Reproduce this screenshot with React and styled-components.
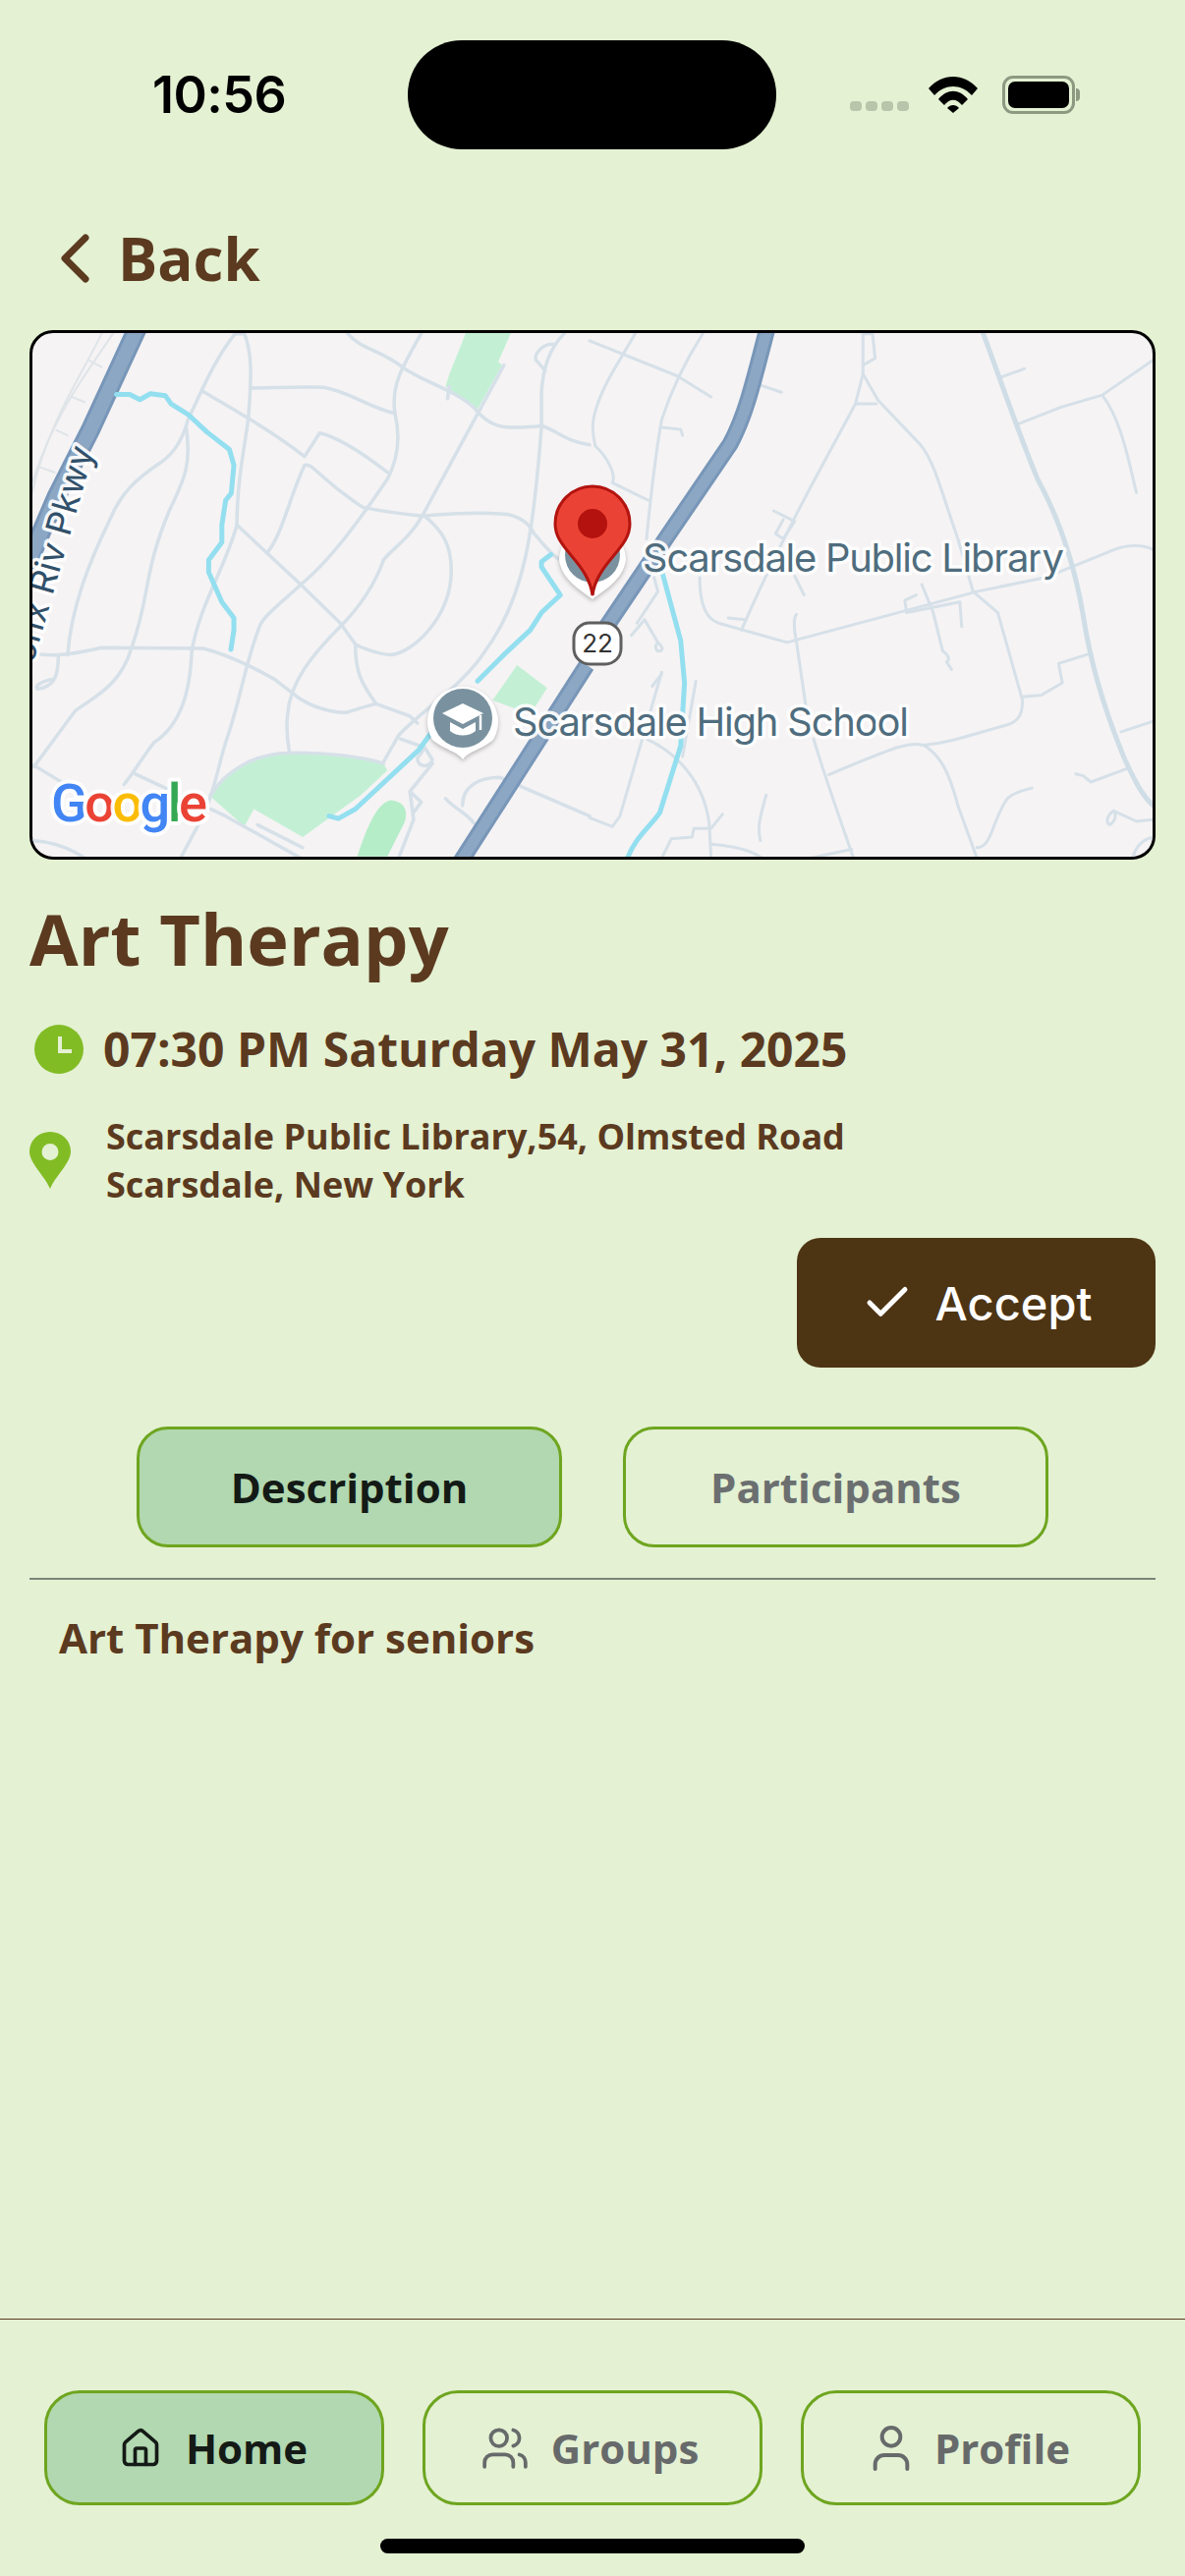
import React from "react"
import styled, { createGlobalStyle } from "styled-components"
import { Check, House, User, Users } from "lucide-react"

const BROWN = "#5b3a20"
const GREEN = "#6ea51f"

const GlobalStyle = createGlobalStyle`
  html, body { margin: 0; padding: 0; }
  body { background: #e4f1d3; font-family: "Open Sans", "Noto Sans", sans-serif; }
`

const Page = styled.div`
  width: 1206px;
  height: 2622px;
  display: flex;
  flex-direction: column;
  background: #e4f1d3;
  overflow: hidden;
`
const StatusBar = styled.div`
  height: 152px;
  padding-top: 41px;
  box-sizing: border-box;
  display: grid;
  grid-template-columns: 415px 375px 1fr;
`
const Time = styled.div`
  font-family: Inter, "Liberation Sans", Arial, sans-serif;
  font-size: 52px;
  line-height: 60px;
  font-weight: 600;
  letter-spacing: -0.5px;
  color: #000;
  padding: 26px 0 0 155px;
`
const Island = styled.div`
  height: 111px;
  background: #000;
  border-radius: 55px;
`
const StatusIcons = styled.div`
  display: flex;
  align-items: flex-start;
  padding: 36px 0 0 75px;
`
const Dots = styled.div`
  display: flex;
  gap: 4px;
  margin: 26px 20px 0 0;
`
const Dot = styled.span`
  width: 12px;
  height: 10px;
  border-radius: 4px;
  background: #b7c6aa;
`
const Battery = styled.div`
  position: relative;
  width: 74px;
  height: 39px;
  margin-left: 25px;
  box-sizing: border-box;
  border: 3px solid #8d9a82;
  border-radius: 11px;
  padding: 3px;
  &::before {
    content: "";
    display: block;
    height: 100%;
    background: #000;
    border-radius: 7px;
  }
  &::after {
    content: "";
    position: absolute;
    right: -8px;
    top: 10px;
    width: 4px;
    height: 13px;
    border-radius: 0 4px 4px 0;
    background: #8d9a82;
  }
`
const BackRow = styled.div`
  height: 184px;
  box-sizing: border-box;
  padding: 71px 0 0 60px;
  display: flex;
  align-items: flex-start;
  gap: 28px;
  color: ${BROWN};
  font-size: 60px;
  line-height: 80px;
  font-weight: 700;
  svg { margin-top: 15px; }
`
const Content = styled.div`
  padding: 0 30px;
  display: flex;
  flex-direction: column;
`
const MapFrame = styled.div`
  height: 539px;
  box-sizing: border-box;
  border: 3px solid #000;
  border-radius: 24px;
  overflow: hidden;
  background: #f5f3f4;
  svg { display: block; }
`
const Title = styled.h1`
  margin: 31px 0 0;
  font-size: 72px;
  line-height: 98px;
  font-weight: 700;
  color: ${BROWN};
`
const DateRow = styled.div`
  display: flex;
  align-items: center;
  gap: 20px;
  margin-top: 32px;
  padding-left: 5px;
  color: ${BROWN};
  font-size: 48px;
  line-height: 64px;
  font-weight: 700;
`
const AddressRow = styled.div`
  display: flex;
  align-items: center;
  gap: 36px;
  margin-top: 32px;
  color: ${BROWN};
  font-size: 36px;
  line-height: 49px;
  font-weight: 700;
`
const ActionRow = styled.div`
  display: flex;
  justify-content: flex-end;
  margin-top: 30px;
`
const AcceptButton = styled.div`
  width: 365px;
  height: 132px;
  display: flex;
  align-items: center;
  justify-content: center;
  gap: 22px;
  border-radius: 24px;
  background: #4d3413;
  color: #fff;
  font-family: Inter, "Liberation Sans", sans-serif;
  font-size: 47px;
  font-weight: 500;
`
const Tabs = styled.div`
  display: flex;
  justify-content: center;
  gap: 62px;
  margin-top: 60px;
  padding-bottom: 31px;
  border-bottom: 2px solid #7c8579;
`
const Tab = styled.div`
  width: 433px;
  height: 123px;
  box-sizing: border-box;
  display: flex;
  align-items: center;
  justify-content: center;
  border: 3px solid ${GREEN};
  border-radius: 32px;
  background: ${(p) => (p.$active ? "#b1d8b0" : "transparent")};
  color: ${(p) => (p.$active ? "#141a16" : "#6b6f70")};
  font-size: 42px;
  font-weight: 700;
`
const Description = styled.p`
  margin: 30px 0 0 30px;
  color: ${BROWN};
  font-size: 42px;
  line-height: 58px;
  font-weight: 700;
`
const BottomBar = styled.div`
  margin-top: auto;
  border-top: 1px solid ${BROWN};
  padding: 72px 45px 0;
  height: 262px;
  box-sizing: border-box;
  display: flex;
  flex-direction: column;
`
const NavRow = styled.div`
  display: flex;
  justify-content: space-between;
`
const NavButton = styled.div`
  width: 346px;
  height: 117px;
  box-sizing: border-box;
  display: flex;
  align-items: center;
  justify-content: center;
  gap: ${(p) => p.$gap}px;
  padding-right: ${(p) => p.$nudge || 0}px;
  border: 3px solid ${GREEN};
  border-radius: 36px;
  background: ${(p) => (p.$active ? "#b1d8b0" : "transparent")};
  color: ${(p) => (p.$active ? "#141a16" : "#676a6a")};
  font-size: 42px;
  font-weight: 700;
`
const HomeIndicator = styled.div`
  width: 432px;
  height: 15px;
  margin: 34px auto 0;
  border-radius: 8px;
  background: #000;
`
const MapLabel = styled.text`
  font-family: Inter, "Liberation Sans", sans-serif;
  font-size: ${(p) => p.$size || 40}px;
  fill: ${(p) => p.$fill || "#4f6d7e"};
  stroke: rgba(255, 255, 255, 0.92);
  stroke-width: 7px;
  stroke-linejoin: round;
  paint-order: stroke;
`
const GoogleMark = styled.text`
  font-family: Roboto, "Open Sans", sans-serif;
  font-size: 54px;
  font-weight: 500;
  letter-spacing: -2.5px;
  stroke: rgba(255, 255, 255, 0.9);
  stroke-width: 8px;
  stroke-linejoin: round;
  paint-order: stroke;
`

// paths below are measured off two crops of the map, each group maps its crop back to page px
const LEFT_T = "translate(0 320) scale(0.3827 0.3571)"
const RIGHT_T = "translate(600 320) scale(0.3865 0.3571)"

const parksLeft = [
  "M1240 50H1360L1325 135L1335 145L1270 270L1185 205L1195 170Z",
  "M555 1370C600 1290 680 1255 770 1250C860 1248 960 1260 1020 1280L1030 1300L960 1370L805 1490L675 1410L650 1460Z",
  "M1375 1000L1455 1065L1410 1140L1310 1100Z",
]

const roadsLeft = [
  "M625 55C570 130 540 210 500 300C490 340 470 390 430 420C360 470 320 510 290 590C240 700 190 830 180 970",
  "M625 55H650C670 110 670 170 660 300C650 380 630 480 630 600C600 720 530 830 510 960C505 1080 480 1170 410 1220C380 1260 360 1300 330 1340",
  "M540 220C620 270 720 330 810 405L850 338C900 350 970 400 1030 450",
  "M665 210C720 210 800 205 860 208C930 220 980 265 1050 282",
  "M925 55C960 100 1010 100 1070 150C1120 190 1200 210 1260 265C1300 320 1330 330 1440 318C1480 330 1500 360 1568 372",
  "M1120 55C1070 150 1040 200 1050 280C1070 370 1050 430 1030 470C960 580 880 700 800 770C740 830 700 860 690 890C650 1000 640 1100 600 1220C580 1290 570 1360 540 1430L480 1550",
  "M1340 145L1125 570C1090 640 1040 670 1020 700C1000 760 960 830 905 890C830 970 770 1050 765 1140C760 1180 765 1220 770 1250",
  "M630 600L800 770L905 880L945 940C960 950 1010 970 1040 970C1100 965 1200 860 1200 730C1200 660 1180 620 1130 575",
  "M710 680C750 630 770 520 810 430C830 420 850 470 965 550C1010 560 1080 570 1125 575C1200 565 1300 565 1350 570C1390 580 1410 600 1420 625C1450 660 1470 690 1490 700",
  "M85 965C130 975 170 975 270 950L540 952C610 970 680 1010 730 1040L790 1090C830 1120 880 1135 920 1135C950 1125 980 1115 1000 1110L1090 1145L1110 1165",
  "M1500 55C1460 100 1445 150 1440 220V320C1420 600 1400 800 1290 960C1230 1060 1120 1130 1060 1200L1020 1275",
  "M945 940C945 1020 960 1050 1000 1110",
  "M90 1290L200 1130C250 1090 320 1060 350 950C400 800 380 740 450 560C490 470 510 430 495 320",
  "M90 1285L220 1370M360 1310L600 1430L800 1550",
  "M560 1370C600 1300 680 1250 770 1250C860 1248 960 1260 1020 1280",
  "M155 975C155 1040 140 1060 100 1068C90 1060 110 1045 140 1040",
  "M85 1500C140 1500 200 1530 225 1550",
  "M1470 85C1440 85 1420 115 1425 130L1450 160",
  "M1065 1210L1130 1235L1150 1270C1140 1295 1110 1290 1110 1265L1130 1235",
  "M1150 1280L1090 1360L1100 1440L1060 1550M1090 1360L1120 1390L1100 1420",
  "M1185 1380C1210 1410 1240 1420 1260 1450M1230 1400C1230 1340 1280 1320 1330 1320L1568 1430",
  "M1190 240L1195 205",
  "M685 1455L805 1520",
]

const railLeft = [
  "M300 55C230 170 150 270 85 480",
  "M270 55C220 170 130 300 85 510",
  "M235 130L270 150M190 235L225 250M150 330L180 345M105 435L145 450",
]

const roadsRight = [
  "M0 75L230 175L320 235",
  "M120 55L85 120C50 180 20 240 10 300C5 340 15 370 15 375C50 410 70 460 60 480L155 530",
  "M298 55C260 120 220 200 190 300C170 420 160 530 150 640",
  "M190 322L240 328L245 345",
  "M720 55V170L760 245L870 370C910 420 930 520 970 640L1010 790L1075 850L1140 1100C1140 1140 1130 1160 1100 1170C1000 1200 950 1220 880 1228C840 1220 820 1225 630 1312",
  "M720 55H745L752 125L720 145",
  "M720 170L700 255H755",
  "M1085 178L1145 155M1130 312L1240 265L1350 230L1484 130M1350 230C1400 300 1420 420 1440 508",
  "M700 255C640 380 520 600 400 900",
  "M290 750C290 830 310 870 340 880L520 935L1020 790L1200 750L1360 680C1400 660 1440 650 1484 670",
  "M545 935L570 1120M545 935C535 880 540 860 545 855",
  "M590 1210C620 1320 660 1440 695 1550",
  "M880 1228C930 1260 950 1320 970 1400L1020 1550",
  "M1020 1520C1060 1520 1060 1440 1100 1380C1120 1360 1150 1355 1165 1350",
  "M1140 1090L1190 1085L1245 1050L1235 995L1315 968",
  "M1400 1190L1484 1160M1320 1333L1415 1295M1320 1333L1300 1315L1280 1310",
  "M0 1435L60 1460L80 1430L190 1020M280 1045L245 1260",
  "M150 1210C230 1250 300 1330 315 1450L320 1550",
  "M190 1550L215 1495L270 1490L275 1465L320 1465L350 1425",
  "M320 1510C380 1515 430 1530 455 1550M465 1370C450 1430 440 1460 450 1500M580 1550L690 1525",
  "M1484 1440L1440 1445L1380 1415C1360 1430 1360 1450 1370 1455C1390 1440 1385 1420 1380 1415M1430 1550C1440 1510 1460 1495 1484 1490",
  "M875 770L905 850L930 960C945 970 950 985 940 990L953 1012M860 800L830 815L835 850L975 820L980 890",
  "M485 560L540 590L510 640L490 625L510 585M540 745L565 800",
  "M145 870L110 915M145 870L180 935C195 950 195 960 180 960C170 950 175 940 180 935M170 750L180 790L125 880M190 1025L165 1060",
  "M445 200L505 222M365 865L410 870",
]

const riversLeft = [
  "M310 228L345 228L372 243L400 226L440 232L455 255L500 285L550 335L610 385L622 430L615 510L600 530L590 600L590 650L555 700L555 735L590 820L622 865L622 900L614 955",
  "M875 1430L900 1437L945 1410L1115 1240L1145 1195",
  "M1270 1045L1340 970L1410 900L1440 850L1490 800L1440 720V705L1465 685",
]

function Strokes({ paths, color, width }) {
  return paths.map((d) => (
    <path key={d} d={d} fill="none" stroke={color} strokeWidth={width} strokeLinecap="round" strokeLinejoin="round" vectorEffect="non-scaling-stroke" />
  ))
}

function Highway({ d, width }) {
  return (
    <>
      <path d={d} fill="none" stroke="#7896b8" strokeWidth={width} vectorEffect="non-scaling-stroke" />
      <path d={d} fill="none" stroke="#8ca7c4" strokeWidth={width - 6} vectorEffect="non-scaling-stroke" />
    </>
  )
}

function MapView() {
  return (
    <svg width="1140" height="533" viewBox="33 339 1140 533">
      <g transform={LEFT_T}>
        {parksLeft.map((d) => <path key={d} d={d} fill="#c3f0d5" />)}
        <path d="M950 1545C970 1480 1000 1390 1040 1385C1080 1390 1085 1420 1075 1450L1030 1545Z" fill="#b5edc8" />
        <Strokes paths={railLeft} color="#dfe4e8" width={2} />
        <Strokes paths={roadsLeft} color="#d6e0e8" width={3.5} />
        <path d="M335 50L85 640" fill="none" stroke="#93dff0" strokeWidth="2" vectorEffect="non-scaling-stroke" />
        <Highway d="M365 40L240 330L150 520L70 720" width={20} />
        <Strokes paths={riversLeft} color="#93dff0" width={5} />
        <Highway d="M1225 1560L1560 1000" width={17} />
      </g>
      <g transform={RIGHT_T}>
        <Strokes paths={roadsRight} color="#d6e0e8" width={3} />
        <path d="M1035 50C1080 180 1130 340 1180 470C1240 590 1280 730 1300 860C1320 1000 1360 1140 1410 1270C1440 1340 1460 1380 1490 1405" fill="none" stroke="#cfdde6" strokeWidth="5" vectorEffect="non-scaling-stroke" />
        <path d="M190 730L240 930L250 1050L240 1230L185 1420C160 1460 120 1490 100 1550" fill="none" stroke="#93dff0" strokeWidth="5" vectorEffect="non-scaling-stroke" />
        <Highway d="M10 945L200 640L370 370C410 290 430 200 468 40" width={17} />
      </g>

      {/* school marker */}
      <path d="M471 773C466 765 450 762 440 753A36 36 0 1 1 502 753C492 762 476 765 471 773Z" fill="#fff" style={{ filter: "drop-shadow(0 2px 2px rgba(0,0,0,.25))" }} />
      <circle cx="471" cy="731" r="30" fill="#7a929f" />
      <path d="M471 716L450 726L471 737L492 726Z" fill="#fff" />
      <path d="M458 735V744C465 750 477 750 484 744V735L471 742Z" fill="#fff" />
      <path d="M489 728V743" stroke="#fff" strokeWidth="2.5" />

      {/* library marker under the red pin */}
      <path d="M603 610C590 600 572 590 569 570A34 34 0 1 1 637 570C634 590 616 600 603 610Z" fill="#fff" style={{ filter: "drop-shadow(0 2px 2px rgba(0,0,0,.25))" }} />
      <circle cx="603" cy="565" r="28" fill="#7a929f" />

      <rect x="584" y="634" width="48" height="42" rx="16" fill="#fff" stroke="#5f5f5f" strokeWidth="3" />
      <text x="608" y="664" textAnchor="middle" fontFamily="Inter, sans-serif" fontSize="26" fill="#333">22</text>

      <path d="M603 606C601 590 592 578 581 565C571 553 565 545 565 533A38 38 0 0 1 641 533C641 545 635 553 625 565C614 578 605 590 603 606Z" fill="#ea4335" stroke="#b3140f" strokeWidth="3" />
      <circle cx="603" cy="533" r="15" fill="#b3120e" />

      <MapLabel x="654" y="582" textLength="429">Scarsdale Public Library</MapLabel>
      <MapLabel x="522" y="749" textLength="403">Scarsdale High School</MapLabel>
      <MapLabel x="96" y="458" $size={36} $fill="#31506a" textAnchor="end" transform="rotate(-74 96 458)">Bronx Riv Pkwy</MapLabel>

      <GoogleMark x="52" y="836">
        <tspan fill="#4285f4">G</tspan>
        <tspan fill="#ea4335">o</tspan>
        <tspan fill="#fbbc05">o</tspan>
        <tspan fill="#4285f4">g</tspan>
        <tspan fill="#34a853">l</tspan>
        <tspan fill="#ea4335">e</tspan>
      </GoogleMark>
    </svg>
  )
}

function Wifi() {
  return (
    <svg width="50" height="38" viewBox="0 0 50 38">
      <path d="M0 13C14 -3 36 -3 50 13L44 20C33 8 17 8 6 20Z" fill="#000" />
      <path d="M10 24C19 13 31 13 40 24L34 30C28 23 22 23 16 30Z" fill="#000" />
      <path d="M19 33C22 29 28 29 31 33L25 38Z" fill="#000" />
    </svg>
  )
}

function BackChevron() {
  return (
    <svg width="32" height="50" viewBox="0 0 32 50">
      <path d="M27 4L6 25L27 46" fill="none" stroke={BROWN} strokeWidth="7" strokeLinecap="round" strokeLinejoin="round" />
    </svg>
  )
}

function ClockIcon() {
  return (
    <svg width="50" height="50" viewBox="0 0 50 50">
      <circle cx="25" cy="25" r="25" fill="#82bc25" />
      <path d="M26 12V27H38" fill="none" stroke="#e4f1d3" strokeWidth="4" />
    </svg>
  )
}

function PlaceIcon() {
  return (
    <svg width="42" height="58" viewBox="0 0 42 58">
      <path fillRule="evenodd" d="M21 58C15 44 0 32 0 20A21 20 0 0 1 42 20C42 32 27 44 21 58ZM21 12A8.5 8.5 0 1 0 21 29A8.5 8.5 0 1 0 21 12Z" fill="#82bc25" />
    </svg>
  )
}

export default function App() {
  return (
    <Page>
      <GlobalStyle />
      <StatusBar>
        <Time>10:56</Time>
        <Island />
        <StatusIcons>
          <Dots><Dot /><Dot /><Dot /><Dot /></Dots>
          <Wifi />
          <Battery />
        </StatusIcons>
      </StatusBar>
      <BackRow>
        <BackChevron />
        <span>Back</span>
      </BackRow>
      <Content>
        <MapFrame><MapView /></MapFrame>
        <Title>Art Therapy</Title>
        <DateRow><ClockIcon />07:30 PM Saturday May 31, 2025</DateRow>
        <AddressRow>
          <PlaceIcon />
          <div>Scarsdale Public Library,54, Olmsted Road<br />Scarsdale, New York</div>
        </AddressRow>
        <ActionRow>
          <AcceptButton><Check size={54} strokeWidth={2.2} />Accept</AcceptButton>
        </ActionRow>
        <Tabs>
          <Tab $active>Description</Tab>
          <Tab>Participants</Tab>
        </Tabs>
        <Description>Art Therapy for seniors</Description>
      </Content>
      <BottomBar>
        <NavRow>
          <NavButton $active $gap={24} $nudge={2}><House size={44} strokeWidth={2} />Home</NavButton>
          <NavButton $gap={22} $nudge={6}><Users size={50} strokeWidth={1.8} />Groups</NavButton>
          <NavButton $gap={16} $nudge={8}><User size={56} strokeWidth={1.7} />Profile</NavButton>
        </NavRow>
        <HomeIndicator />
      </BottomBar>
    </Page>
  )
}
